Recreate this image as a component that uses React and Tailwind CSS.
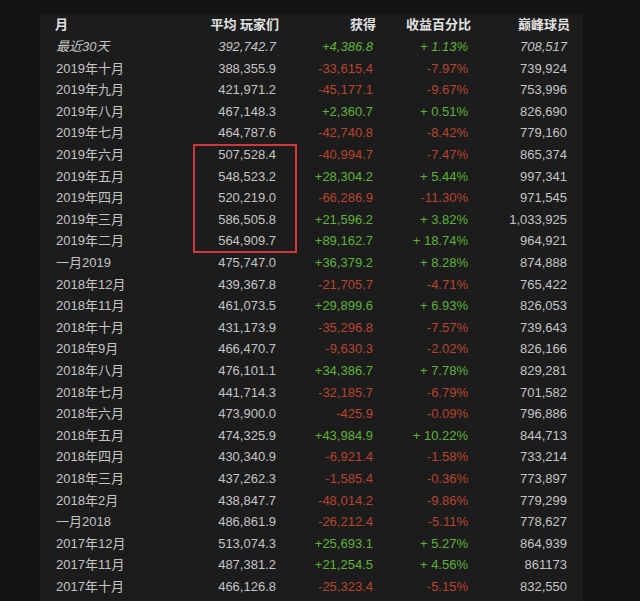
import React from 'react';

const rows = [
  ['最近30天', '392,742.7', '+4,386.8', '+ 1.13%', '708,517'],
  ['2019年十月', '388,355.9', '-33,615.4', '-7.97%', '739,924'],
  ['2019年九月', '421,971.2', '-45,177.1', '-9.67%', '753,996'],
  ['2019年八月', '467,148.3', '+2,360.7', '+ 0.51%', '826,690'],
  ['2019年七月', '464,787.6', '-42,740.8', '-8.42%', '779,160'],
  ['2019年六月', '507,528.4', '-40,994.7', '-7.47%', '865,374'],
  ['2019年五月', '548,523.2', '+28,304.2', '+ 5.44%', '997,341'],
  ['2019年四月', '520,219.0', '-66,286.9', '-11.30%', '971,545'],
  ['2019年三月', '586,505.8', '+21,596.2', '+ 3.82%', '1,033,925'],
  ['2019年二月', '564,909.7', '+89,162.7', '+ 18.74%', '964,921'],
  ['一月2019', '475,747.0', '+36,379.2', '+ 8.28%', '874,888'],
  ['2018年12月', '439,367.8', '-21,705.7', '-4.71%', '765,422'],
  ['2018年11月', '461,073.5', '+29,899.6', '+ 6.93%', '826,053'],
  ['2018年十月', '431,173.9', '-35,296.8', '-7.57%', '739,643'],
  ['2018年9月', '466,470.7', '-9,630.3', '-2.02%', '826,166'],
  ['2018年八月', '476,101.1', '+34,386.7', '+ 7.78%', '829,281'],
  ['2018年七月', '441,714.3', '-32,185.7', '-6.79%', '701,582'],
  ['2018年六月', '473,900.0', '-425.9', '-0.09%', '796,886'],
  ['2018年五月', '474,325.9', '+43,984.9', '+ 10.22%', '844,713'],
  ['2018年四月', '430,340.9', '-6,921.4', '-1.58%', '733,214'],
  ['2018年三月', '437,262.3', '-1,585.4', '-0.36%', '773,897'],
  ['2018年2月', '438,847.7', '-48,014.2', '-9.86%', '779,299'],
  ['一月2018', '486,861.9', '-26,212.4', '-5.11%', '778,627'],
  ['2017年12月', '513,074.3', '+25,693.1', '+ 5.27%', '864,939'],
  ['2017年11月', '487,381.2', '+21,254.5', '+ 4.56%', '861173'],
  ['2017年十月', '466,126.8', '-25,323.4', '-5.15%', '832,550'],
]

const gridCols = 'grid grid-cols-[130px_91px_97px_95px_99px]'

export default function App() {
  return (
    <div
      className="w-[640px] h-[601px] overflow-hidden bg-[#141414] pt-[14px] pl-[40px]"
      style={{ fontFamily: '"Liberation Sans", Arial, "Noto Sans CJK SC", sans-serif' }}
    >
      <div className="relative w-[543px] h-[600px] bg-[#1c1c1c] pl-[15px] text-[13px] text-[#c4c4c4]">
        {/* header */}
        <div className={`${gridCols} h-[22px] items-center font-bold text-[#e2e2e2]`}>
          <div>月</div>
          <div className="text-right mr-[-3px]">平均 玩家们</div>
          <div className="text-right mr-[-3px]">获得</div>
          <div className="text-right mr-[-3px]">收益百分比</div>
          <div className="text-right mr-[-3px]">巅峰球员</div>
        </div>

        {rows.map((r, i) => {
          const up = r[2].startsWith('+')
          const color = up ? 'text-[#5fb336]' : 'text-[#b8452f]'
          return (
            <div key={r[0]} className={`${gridCols} h-[21.6px] items-center ${i === 0 ? 'italic' : ''}`}>
              <div className="pl-[1px]">{r[0]}</div>
              <div className="text-right">{r[1]}</div>
              <div className={`text-right ${color}`}>{r[2]}</div>
              <div className={`text-right ${color}`}>{r[3]}</div>
              <div className="text-right">{r[4]}</div>
            </div>
          )
        })}

        {/* highlight box */}
        <div className="absolute left-[153px] top-[130px] w-[104px] h-[109px] border-2 border-[#d2373c]" />
      </div>
    </div>
  )
}
